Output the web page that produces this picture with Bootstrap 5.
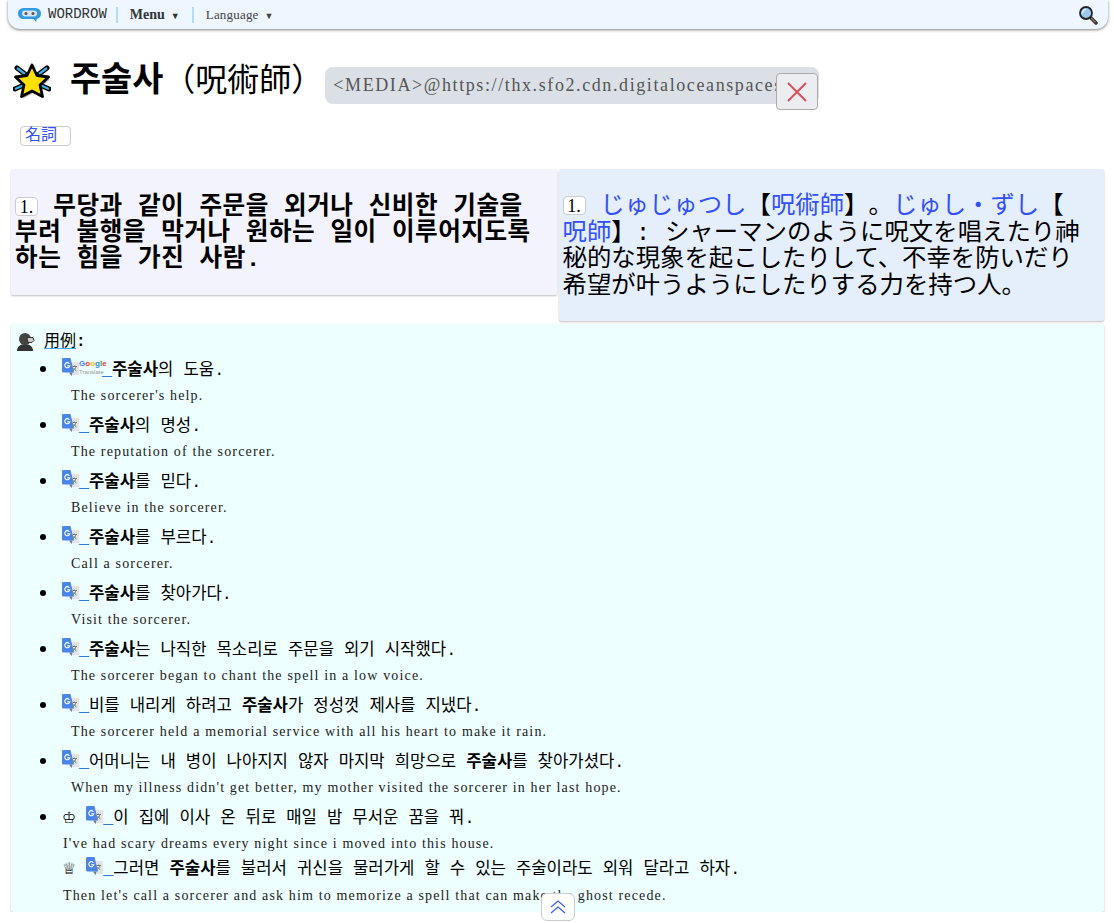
<!DOCTYPE html>
<html lang="ko">
<head>
    <meta charset="UTF-8">
    <meta name="viewport" content="width=device-width, initial-scale=1.0">
    <title>WORDROW</title>
    <link href="https://cdn.jsdelivr.net/npm/bootstrap@5.3.0/dist/css/bootstrap.min.css" rel="stylesheet">
    <style>
        body {
            font-family: "Liberation Mono", "Noto Sans CJK KR", monospace;
            color: #000;
            background: #fff;
            overflow: hidden;
        }
        .top-bar {
            height: 29px;
            margin: 0 6px 0 8px;
            padding: 0 10px;
            background: #eef6ff;
            border-radius: 0 0 12px 12px;
            box-shadow: 0 1px 3px rgba(0, 0, 0, .5);
            font-family: "Liberation Serif", serif;
        }
        .top-sep { width: 2px; height: 16px; background: #b5dcf7; }
        .brand-txt { font-family: "Liberation Mono", monospace; font-size: 14px; color: #333; margin: 0 9px 0 6px; }
        .menu-txt { font-size: 14px; color: #333; font-weight: bold; margin: 0 12px; }
        .lang-txt { font-size: 13px; letter-spacing: .2px; color: #444; margin: 0 12px; }
        .tri { font-size: 9px; margin-left: 6px; }
        .head-row { padding: 26px 0 0 13px; height: 97px; }
        .star-ico { margin-top: 6px; }
        .word-title { font-size: 32px; font-weight: normal; margin: 0 0 0 19px; white-space: nowrap; line-height: 44px; }
        .word-title b { font-family: "Noto Sans CJK KR", sans-serif; font-size: 33.800px; }
        .media-box {
            width: 494px;
            height: 37px;
            padding: 0 8px;
            background: #dae0e6;
            border-radius: 8px;
            font-family: "Liberation Serif", serif;
            font-size: 18px;
            letter-spacing: 1.600px;
            line-height: 37px;
            color: #555;
            overflow: hidden;
            white-space: nowrap;
        }
        .media-wrap { position: relative; margin: 12px 0 0 2px; }
        .close-box {
            position: absolute;
            left: 451px;
            top: 6px;
            width: 42px;
            height: 37px;
            background: #ecedf1;
            border: 1px solid #aaa;
            border-radius: 4px;
        }
        .pos-row { padding-left: 20px; height: 43px; }
        .pos-tag {
            display: block;
            width: 51px;
            height: 20px;
            padding-left: 4px;
            background: #fff;
            border: 1px solid #ccc;
            border-radius: 4px;
            color: #3350ff;
            font-size: 16px;
            line-height: 19px;
        }
        .mean-row { padding: 0 10px 0 11px; gap: 2px; align-items: flex-start; }
        .mean-box {
            flex: none;
            width: calc(50% - 1px);
            box-shadow: 0 1px 2px rgba(0, 0, 0, .25);
            border-radius: 2px;
        }
        .mean-ko {
            padding: 26px 3px 22px 4px;
            background: #f3f3fd;
            font-size: 24.600px;
            font-weight: bold;
            line-height: 26px;
            letter-spacing: .5px;
            word-break: keep-all;
        }
        .mean-ja {
            padding: 25px 10px 21px 4px;
            background: #e5eefb;
            font-family: "Liberation Mono", "Noto Sans CJK JP", monospace;
            font-size: 24.400px;
            line-height: 26.500px;
            text-spacing-trim: space-all;
        }
        .num-tag {
            display: inline-block;
            width: 23px;
            height: 19px;
            background: #fff;
            border: 1px solid #ccc;
            border-radius: 4px;
            font: normal 18px/18px "Liberation Serif", serif;
            text-align: center;
            vertical-align: 1px;
            letter-spacing: 0;
        }
        .jump { display: inline-block; color: #3350ff; }
        .ex-box {
            margin: 3px 10px 0 11px;
            height: 588px;
            padding: 5px 5px 0 5px;
            background: #eeffff;
            box-shadow: 0 1px 2px rgba(0, 0, 0, .25);
            border-radius: 2px;
        }
        .ex-head { font-size: 16px; height: 25px; line-height: 22px; }
        .ex-head u { text-decoration-color: #39a9f5; text-underline-offset: 2px; }
        .ex-list { margin: 0; padding-left: 46px; list-style: none; }
        .ex-list li { position: relative; }
        .ex-list li::before {
            content: "";
            position: absolute;
            left: -22px;
            top: 12px;
            width: 6px;
            height: 6px;
            background: #000;
            border-radius: 50%;
        }
        .ko-line { font-size: 16.700px; line-height: 28px; height: 28px; padding-top: 3px; white-space: nowrap; }
        .ko-line svg { margin: -8px 0 -2px; }
        .en-line {
            font-family: "Liberation Serif", serif;
            font-size: 14px;
            letter-spacing: 1.150px;
            line-height: 28px;
            height: 28px;
            padding-left: 9px;
            color: #222;
            white-space: nowrap;
        }
        .en-line.flat { padding-left: 1px; }
        .ko-line.close-up { margin: -4px 0 4px; height: 24px; padding-top: 2px; }
        .under { color: #2d7be0; }
        .gt-logo { display: inline-flex; flex-direction: column; vertical-align: 9px; width: 23px; height: 8px; font-family: "Liberation Sans", sans-serif; line-height: 8px; }
        .gt-logo .g1 { font-size: 8px; font-weight: bold; white-space: nowrap; }
        .gt-logo .g2 { font-size: 6px; color: #999; white-space: nowrap; }
        .gg-b { color: #4285f4; }
        .gg-r { color: #ea4335; }
        .gg-y { color: #fbbc05; }
        .gg-g { color: #34a853; }
        .chess { font-family: "DejaVu Sans", sans-serif; font-size: 16px; line-height: 1; margin-right: 10px; }
        .up-btn {
            position: absolute;
            left: 541px;
            top: 893px;
            width: 34px;
            height: 28px;
            background: #fff;
            border: 1px solid #ccc;
            border-radius: 6px;
        }
    </style>
</head>
<body>
    <svg width="0" height="0" class="d-block">
        <defs>
            <symbol id="gt" viewBox="0 0 17 19">
                <path d="M6 4h10c.6 0 1 .4 1 1v11c0 .6-.4 1-1 1H9z" fill="#e2e4e8"/>
                <path d="M10.500 8.500h4.500M12.700 7.500v1M14 8.500c-.4 1.800-1.500 3-3 4M11.500 10c.6 1 1.500 2 2.800 2.700" stroke="#777" fill="none"/>
                <path d="M0 1.500C0 .7.700 0 1.500 0H8.500l3.500 14.500H1.500C.7 14.500 0 13.800 0 13z" fill="#4a86e8"/>
                <path d="M7 14.500l2.500 3.500 1-3.500z" fill="#6c7a94"/>
                <path d="M7.300 5.600A2.500 2.500 0 1 0 7.800 7.700H5.300" stroke="#fff" stroke-width="1.100" fill="none"/>
            </symbol>
        </defs>
    </svg>

    <!-- Top bar -->
    <nav class="top-bar d-flex align-items-center">
        <svg width="24" height="15" viewBox="0 0 24 15">
            <rect x="0" y="1" width="23" height="11" rx="5.500" fill="#2f9be0"/>
            <path d="M15 11l3 4 1-4z" fill="#2f9be0"/>
            <rect x="4" y="3.500" width="15" height="6" rx="3" fill="#d5e6ef"/>
            <circle cx="8" cy="6.500" r="1.500" fill="#555"/>
            <circle cx="15" cy="6.500" r="1.500" fill="#555"/>
        </svg>
        <span class="brand-txt">WORDROW</span>
        <span class="top-sep"></span>
        <span class="menu-txt">Menu<span class="tri">▼</span></span>
        <span class="top-sep"></span>
        <span class="lang-txt">Language<span class="tri">▼</span></span>
        <svg class="ms-auto" width="20" height="20" viewBox="0 0 20 20">
            <path d="M12 12l6 6" stroke="#333" stroke-width="3.500" stroke-linecap="round"/>
            <path d="M13 13l4.500 4.500" stroke="#8a7a55" stroke-width="1.200"/>
            <circle cx="8" cy="8" r="6" fill="#9cc8ee" stroke="#222" stroke-width="1.800"/>
            <path d="M4.500 8a3.500 3.500 0 0 1 3.500-3.500" stroke="#e3f2ff" stroke-width="1.500" fill="none"/>
        </svg>
    </nav>

    <!-- Title -->
    <div class="head-row d-flex align-items-start">
        <svg width="38" height="38" viewBox="0 0 38 38" class="star-ico">
            <path d="M19 4l5 10.500 11.500 1.500-8.500 8 2.500 11.500L19 30 8.500 35.500 11 24l-8.500-8L14 14.500z" fill="#000" opacity=".3" transform="translate(1.500 2)"/>
            <path d="M4 7l8 6M34 7l-8 6M2 28l9-4M36 28l-9-4" stroke="#000" stroke-width="5" stroke-linecap="round"/>
            <path d="M4 7l8 6M34 7l-8 6M2 28l9-4M36 28l-9-4" stroke="#35b6ea" stroke-width="2.200"/>
            <path d="M19 4l5 10.500 11.500 1.500-8.500 8 2.500 11.500L19 30 8.500 35.500 11 24l-8.500-8L14 14.500z" fill="#ffe000" stroke="#000" stroke-width="2.800" stroke-linejoin="round"/>
        </svg>
        <h1 class="word-title"><b>주술사</b><span>（呪術師）</span></h1>
        <div class="media-wrap">
            <div class="media-box">&lt;MEDIA&gt;@https://thx.sfo2.cdn.digitaloceanspaces.</div>
            <div class="close-box d-flex align-items-center justify-content-center">
                <svg width="22" height="22" viewBox="0 0 22 22"><path d="M2 2l18 18M20 2L2 20" stroke="#dc4f5c" stroke-width="2"/></svg>
            </div>
        </div>
    </div>

    <div class="pos-row"><span class="pos-tag">名詞</span></div>

    <!-- Meanings -->
    <div class="mean-row d-flex">
        <div class="mean-box mean-ko"><span class="num-tag">1.</span> 무당과 같이 주문을 외거나 신비한 기술을 부려 불행을 막거나 원하는 일이 이루어지도록 하는 힘을 가진 사람.</div>
        <div class="mean-box mean-ja"><span class="num-tag">1.</span> <span class="jump">じゅじゅつし</span>【<span class="jump">呪術師</span>】。<span class="jump">じゅし・ずし</span>【<span class="jump">呪師</span>】: シャーマンのように呪文を唱えたり神秘的な現象を起こしたりして、不幸を防いだり希望が叶うようにしたりする力を持つ人。</div>
    </div>

    <!-- Examples -->
    <div class="ex-box">
        <div class="ex-head d-flex align-items-center">
            <svg width="20" height="20" viewBox="0 0 20 20" class="me-2">
                <path d="M1 19c0-4 3-7 8-7s8 3 8 7z" fill="#333"/>
                <circle cx="9" cy="7" r="6" fill="#444"/>
                <path d="M11 5.500h6l1 3-2 2h-4z" fill="#ccc" stroke="#333"/>
            </svg>
            <span><u>用例</u><b>:</b></span>
        </div>
        <ul class="ex-list">
            <li>
                <div class="ko-line"><svg width="17" height="19" viewBox="0 0 17 19"><use href="#gt"/></svg><span class="gt-logo"><span class="g1"><span class="gg-b">G</span><span class="gg-r">o</span><span class="gg-y">o</span><span class="gg-b">g</span><span class="gg-g">l</span><span class="gg-r">e</span></span><span class="g2">Translate</span></span><span class="under">_</span><b>주술사</b>의 도움.</div>
                <div class="en-line">The sorcerer's help.</div>
            </li>
            <li>
                <div class="ko-line"><svg width="17" height="19" viewBox="0 0 17 19"><use href="#gt"/></svg><span class="under">_</span><b>주술사</b>의 명성.</div>
                <div class="en-line">The reputation of the sorcerer.</div>
            </li>
            <li>
                <div class="ko-line"><svg width="17" height="19" viewBox="0 0 17 19"><use href="#gt"/></svg><span class="under">_</span><b>주술사</b>를 믿다.</div>
                <div class="en-line">Believe in the sorcerer.</div>
            </li>
            <li>
                <div class="ko-line"><svg width="17" height="19" viewBox="0 0 17 19"><use href="#gt"/></svg><span class="under">_</span><b>주술사</b>를 부르다.</div>
                <div class="en-line">Call a sorcerer.</div>
            </li>
            <li>
                <div class="ko-line"><svg width="17" height="19" viewBox="0 0 17 19"><use href="#gt"/></svg><span class="under">_</span><b>주술사</b>를 찾아가다.</div>
                <div class="en-line">Visit the sorcerer.</div>
            </li>
            <li>
                <div class="ko-line"><svg width="17" height="19" viewBox="0 0 17 19"><use href="#gt"/></svg><span class="under">_</span><b>주술사</b>는 나직한 목소리로 주문을 외기 시작했다.</div>
                <div class="en-line">The sorcerer began to chant the spell in a low voice.</div>
            </li>
            <li>
                <div class="ko-line"><svg width="17" height="19" viewBox="0 0 17 19"><use href="#gt"/></svg><span class="under">_</span>비를 내리게 하려고 <b>주술사</b>가 정성껏 제사를 지냈다.</div>
                <div class="en-line">The sorcerer held a memorial service with all his heart to make it rain.</div>
            </li>
            <li>
                <div class="ko-line"><svg width="17" height="19" viewBox="0 0 17 19"><use href="#gt"/></svg><span class="under">_</span>어머니는 내 병이 나아지지 않자 마지막 희망으로 <b>주술사</b>를 찾아가셨다.</div>
                <div class="en-line">When my illness didn't get better, my mother visited the sorcerer in her last hope.</div>
            </li>
            <li>
                <div class="ko-line"><span class="chess">♔</span><svg width="17" height="19" viewBox="0 0 17 19"><use href="#gt"/></svg><span class="under">_</span>이 집에 이사 온 뒤로 매일 밤 무서운 꿈을 꿔.</div>
                <div class="en-line flat">I've had scary dreams every night since i moved into this house.</div>
                <div class="ko-line close-up"><span class="chess">♕</span><svg width="17" height="19" viewBox="0 0 17 19"><use href="#gt"/></svg><span class="under">_</span>그러면 <b>주술사</b>를 불러서 귀신을 물러가게 할 수 있는 주술이라도 외워 달라고 하자.</div>
                <div class="en-line flat">Then let's call a sorcerer and ask him to memorize a spell that can make the ghost recede.</div>
            </li>
        </ul>
    </div>

    <!-- Back to top -->
    <div class="up-btn d-flex align-items-center justify-content-center">
        <svg width="16" height="16" viewBox="0 0 16 16"><path d="M1 8l7-6 7 6M1 14l7-6 7 6" stroke="#3a62f0" stroke-width="1.300" fill="none"/></svg>
    </div>

    <script src="https://cdn.jsdelivr.net/npm/bootstrap@5.3.0/dist/js/bootstrap.bundle.min.js"></script>
</body>
</html>
